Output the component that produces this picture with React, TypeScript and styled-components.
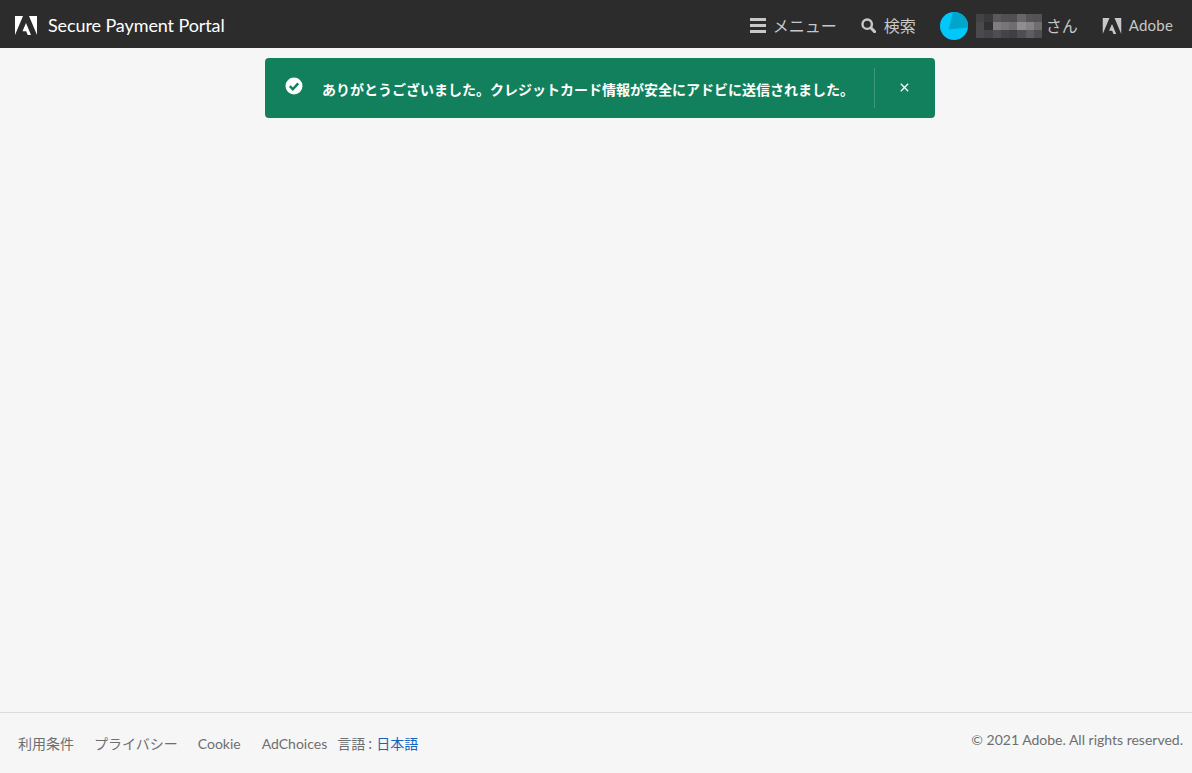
import React from "react";
import styled, { createGlobalStyle } from "styled-components";

const Global = createGlobalStyle`
  html, body { margin: 0; padding: 0; height: 100%; background: #f6f6f6; }
  #root { height: 100%; }
  * { box-sizing: border-box; }
`;

const FONT = `Lato, "Noto Sans", "Noto Sans CJK JP", sans-serif`;
const JP = `"Noto Sans CJK JP", sans-serif`;

const Page = styled.div`
  height: 773px;
  display: flex;
  flex-direction: column;
  font-family: ${FONT};
  background: #f6f6f6;
  overflow: hidden;
`;

const Header = styled.header`
  height: 48px;
  flex: none;
  background: #2c2c2c;
  display: flex;
  align-items: center;
  justify-content: space-between;
  padding: 3px 19px 0 15px;
`;

const Brand = styled.div`
  display: flex;
  align-items: center;
  gap: 11px;
  color: #fff;
  font-size: 18px;
  letter-spacing: -0.1px;
`;

const BrandName = styled.span`
  margin-top: -1px;
`;

const Nav = styled.nav`
  display: flex;
  align-items: center;
  color: #c8c8c8;
  font-size: 16px;
`;

const NavItem = styled.div<{ $gap: number; $right: number }>`
  display: flex;
  align-items: center;
  gap: ${(p) => p.$gap}px;
  margin-right: ${(p) => p.$right}px;
  font-family: ${JP};
`;

const NavLabel = styled.span`
  margin-top: -2px;
`;

const AdobeText = styled.span`
  font-family: ${FONT};
  font-size: 15px;
  letter-spacing: 0.2px;
  margin-top: -1px;
`;

const Mosaic = styled.svg`
  display: block;
  margin: 1px -4px 0 0;
`;

const Main = styled.main`
  flex: 1;
  display: flex;
  justify-content: center;
  align-items: flex-start;
  padding: 10px 0 0 8px;
`;

const Toast = styled.div`
  width: 670px;
  height: 60px;
  background: #12805c;
  border-radius: 4px;
  display: flex;
  align-items: center;
  color: #fff;
  padding: 10px 0 10px 20px;
`;

const ToastIcon = styled.svg`
  flex: none;
  margin: -4px 19px 0 0;
`;

const ToastText = styled.div`
  flex: 1;
  font-family: ${JP};
  font-weight: 700;
  font-size: 14px;
  white-space: nowrap;
  margin-top: 2px;
`;

const ToastClose = styled.div`
  width: 61px;
  height: 40px;
  flex: none;
  border-left: 1px solid rgba(255, 255, 255, 0.2);
  display: flex;
  align-items: center;
  justify-content: center;
  padding: 0 2px 2px 0;
`;

const Footer = styled.footer`
  height: 61px;
  flex: none;
  border-top: 1px solid #dcdcdc;
  display: flex;
  justify-content: space-between;
  padding: 0 9px 0 18px;
  color: #6e6e6e;
  font-size: 14px;
`;

const FooterLinks = styled.div`
  display: flex;
  align-items: center;
  height: 60px;
`;

const FooterLink = styled.span<{ $right: number }>`
  margin-right: ${(p) => p.$right}px;
  font-family: ${FONT};
`;

const JpLink = styled(FooterLink)`
  font-family: ${JP};
`;

const LangLabel = styled.span`
  font-family: ${JP};
  margin-right: 4px;
`;

const LangValue = styled.span`
  color: #1565c0;
  font-family: ${JP};
`;

const Copyright = styled.div`
  height: 52px;
  display: flex;
  align-items: center;
`;

const AdobeMark = ({ color, w, h }: { color: string; w: number; h: number }) => (
  <svg width={w} height={h} viewBox="0 0 22 19" fill={color}>
    <path d="M0 0H8L0 19Z" />
    <path d="M14 0H22V19Z" />
    <path d="M11 7L16 19H12.7L11.2 15.2H7.5Z" />
  </svg>
);

const cells = [
  ["#434245", "#3a393c", "#5a585b", "#525053", "#505053", "#686668", "#565458", "#545256"],
  ["#4a494c", "#302f34", "#807d80", "#787578", "#706d70", "#908d90", "#858285", "#706d70"],
  ["#4a494c", "#454448", "#504e52", "#454347", "#403f42", "#504e52", "#605d61", "#504e52"],
];

export default function App() {
  return (
    <Page>
      <Global />
      <Header>
        <Brand>
          <AdobeMark color="#fff" w={22} h={19} />
          <BrandName>Secure Payment Portal</BrandName>
        </Brand>
        <Nav>
          <NavItem $gap={7} $right={24}>
            <svg width="16" height="15" viewBox="0 0 16 15" fill="#c8c8c8">
              <rect width="16" height="3" />
              <rect y="6" width="16" height="3" />
              <rect y="12" width="16" height="3" />
            </svg>
            <NavLabel>メニュー</NavLabel>
          </NavItem>
          <NavItem $gap={8} $right={24}>
            <svg width="15" height="15" viewBox="0 0 15 15" fill="none" stroke="#c8c8c8">
              <circle cx="6.2" cy="6.2" r="4.7" strokeWidth="2.4" />
              <path d="M9.8 9.8L13.6 13.6" strokeWidth="3" strokeLinecap="round" />
            </svg>
            <NavLabel>検索</NavLabel>
          </NavItem>
          <NavItem $gap={8} $right={24}>
            <svg width="28" height="28" viewBox="0 0 28 28">
              <circle cx="14" cy="14" r="14" fill="#00c8fa" />
              <path d="M13 0.1A14 14 0 0 1 28 15.5L8.5 17.5Z" fill="#00a5cc" />
            </svg>
            <Mosaic width="66" height="24" viewBox="0 0 8 3" preserveAspectRatio="none" shapeRendering="crispEdges">
              {cells.map((row, y) =>
                row.map((c, x) => <rect key={`${x}-${y}`} x={x} y={y} width="1" height="1" fill={c} />)
              )}
            </Mosaic>
            <NavLabel>さん</NavLabel>
          </NavItem>
          <NavItem $gap={7} $right={0}>
            <AdobeMark color="#c8c8c8" w={20} h={16} />
            <AdobeText>Adobe</AdobeText>
          </NavItem>
        </Nav>
      </Header>
      <Main>
        <Toast>
          <ToastIcon width="18" height="18" viewBox="0 0 18 18">
            <circle cx="9" cy="9" r="8.5" fill="#fff" />
            <path d="M4.8 9.2L7.8 12.2L13.2 6.4" fill="none" stroke="#12805c" strokeWidth="2.4" />
          </ToastIcon>
          <ToastText>ありがとうございました。クレジットカード情報が安全にアドビに送信されました。</ToastText>
          <ToastClose>
            <svg width="9" height="9" viewBox="0 0 9 9" stroke="#fff" strokeWidth="1.3">
              <path d="M0.8 0.8L8.2 8.2M8.2 0.8L0.8 8.2" />
            </svg>
          </ToastClose>
        </Toast>
      </Main>
      <Footer>
        <FooterLinks>
          <JpLink $right={20}>利用条件</JpLink>
          <JpLink $right={20}>プライバシー</JpLink>
          <FooterLink $right={21}>Cookie</FooterLink>
          <FooterLink $right={10}>AdChoices</FooterLink>
          <LangLabel>言語 :</LangLabel>
          <LangValue>日本語</LangValue>
        </FooterLinks>
        <Copyright>© 2021 Adobe. All rights reserved.</Copyright>
      </Footer>
    </Page>
  );
}
